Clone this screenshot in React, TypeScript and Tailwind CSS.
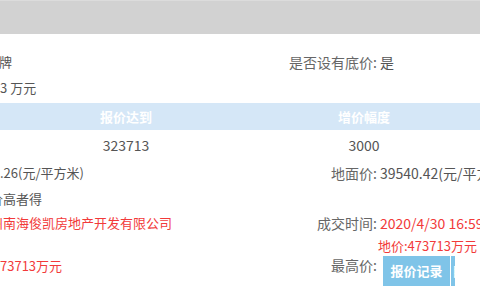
const Row = ({ h, left, label, value, shift = '', leftClass = '', valueClass = '' }: {
	h: string;
	left?: React.ReactNode;
	label?: string;
	value?: React.ReactNode;
	shift?: string;
	leftClass?: string;
	valueClass?: string;
}) => (
	<div className={`flex items-center ${h}`}>
		<div className={`w-[280px] shrink-0 whitespace-nowrap text-[13px] ${leftClass}`}>
			<span className={`inline-block ${shift}`}>{left}</span>
		</div>
		<div className="w-[97px] shrink-0 text-right whitespace-nowrap text-[#666]">{label}</div>
		<div className={`pl-[3px] whitespace-nowrap ${valueClass}`}>{value}</div>
	</div>
);

const App = (): JSX.Element => {
	return (
		<div className="w-[480px] h-[300px] overflow-hidden bg-white text-[14px] leading-[16px] text-[#555] font-['Noto_Sans_CJK_SC','Noto_Sans',sans-serif]">
			<div className="h-[34px] bg-[#d2d2d2] border-t border-[#dcdcdc]" />
			<div className="pt-[15px]">
				<Row h="h-[26px]" left="挂牌" shift="-ml-[14px]" label="是否设有底价:" value="是" />
				<Row h="h-[26px]" left="3 万元" />
			</div>

			<div className="mt-[2px] h-[27px] bg-[#d5e7f7] grid grid-cols-[252px_224px] items-center text-[13px] text-white font-bold">
				<div className="text-center">报价达到</div>
				<div className="text-center">增价幅度</div>
			</div>
			<div className="h-[29px] grid grid-cols-[252px_224px] items-center">
				<div className="text-center">323713</div>
				<div className="text-center">3000</div>
			</div>

			<Row h="h-[28px]" left=".26(元/平方米)" label="地面价:" value="39540.42(元/平方米)" />
			<Row h="h-[24px]" left="价高者得" shift="-ml-[10px]" />
			<Row
				h="h-[24px]"
				left="州南海俊凯房地产开发有限公司"
				shift="-ml-[10px]"
				leftClass="text-[#f23a3a]"
				label="成交时间:"
				value="2020/4/30 16:59:45"
				valueClass="text-[#f23a3a]"
			/>
			<div className="h-[22px] flex items-center pl-[378px] whitespace-nowrap text-[13px] text-[#f23a3a]">
				地价:473713万元
			</div>
			<div className="flex items-start h-[42px]">
				<div className="w-[280px] shrink-0 pt-[1px] text-[13px] text-[#f23a3a] whitespace-nowrap">73713万元</div>
				<div className="w-[97px] shrink-0 text-right text-[#666]">最高价:</div>
				<div className="ml-[6px] -mt-[1px] flex h-[30px] bg-[#7fc4e8] text-white font-bold text-[13px]">
					<div className="w-[67px] flex items-center justify-center">报价记录</div>
					<div className="w-[5px] border-l border-white overflow-hidden flex items-center pl-[1px] font-normal">目</div>
				</div>
			</div>
		</div>
	);
};

export default App;
